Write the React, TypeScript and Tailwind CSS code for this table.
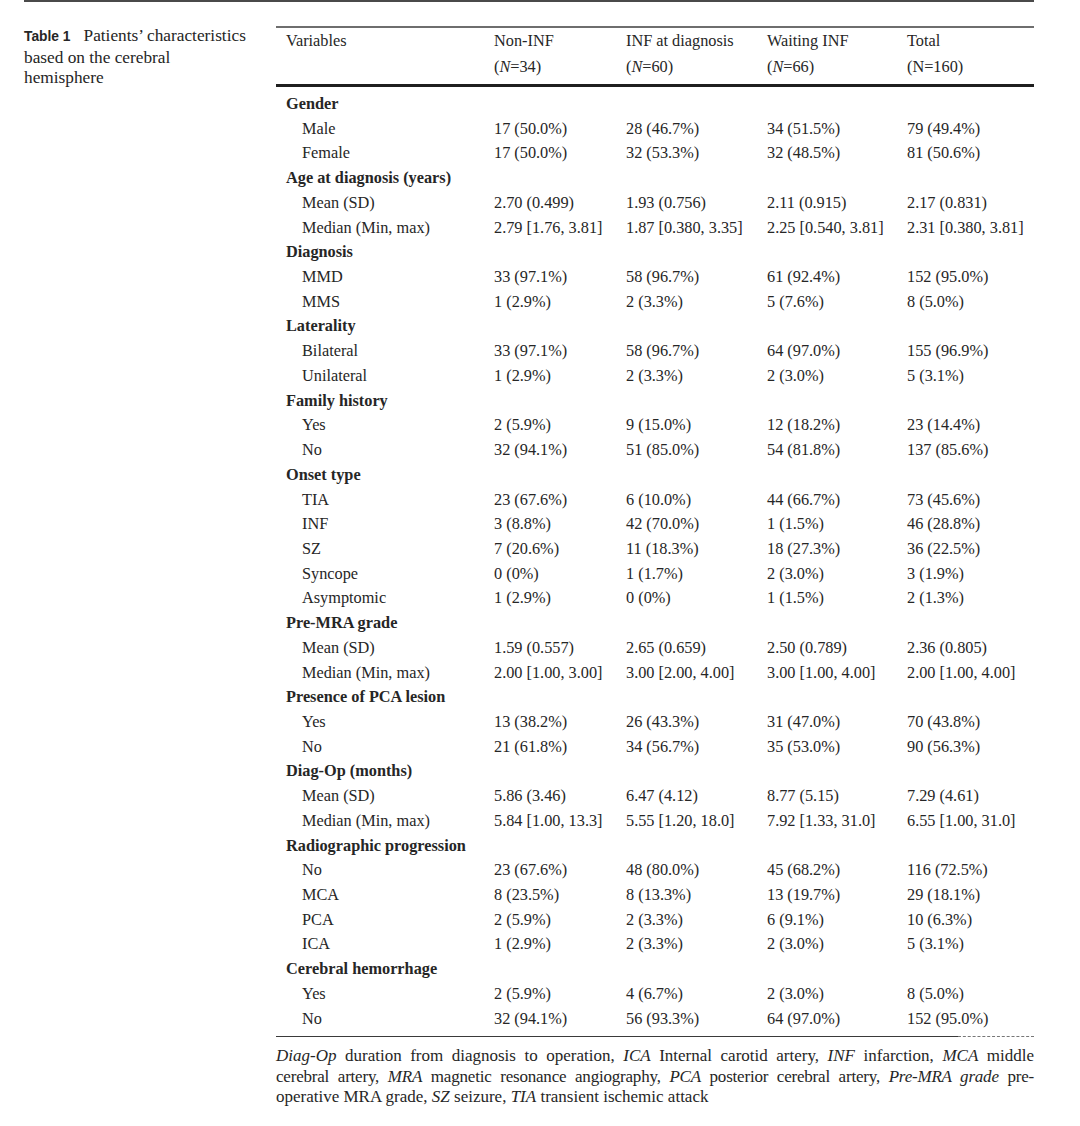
import React from "react";

type Row = { label: string; group?: boolean; values?: string[] };

const rows: Row[] = [
  { label: "Gender", group: true },
  { label: "Male", values: ["17 (50.0%)", "28 (46.7%)", "34 (51.5%)", "79 (49.4%)"] },
  { label: "Female", values: ["17 (50.0%)", "32 (53.3%)", "32 (48.5%)", "81 (50.6%)"] },
  { label: "Age at diagnosis (years)", group: true },
  { label: "Mean (SD)", values: ["2.70 (0.499)", "1.93 (0.756)", "2.11 (0.915)", "2.17 (0.831)"] },
  { label: "Median (Min, max)", values: ["2.79 [1.76, 3.81]", "1.87 [0.380, 3.35]", "2.25 [0.540, 3.81]", "2.31 [0.380, 3.81]"] },
  { label: "Diagnosis", group: true },
  { label: "MMD", values: ["33 (97.1%)", "58 (96.7%)", "61 (92.4%)", "152 (95.0%)"] },
  { label: "MMS", values: ["1 (2.9%)", "2 (3.3%)", "5 (7.6%)", "8 (5.0%)"] },
  { label: "Laterality", group: true },
  { label: "Bilateral", values: ["33 (97.1%)", "58 (96.7%)", "64 (97.0%)", "155 (96.9%)"] },
  { label: "Unilateral", values: ["1 (2.9%)", "2 (3.3%)", "2 (3.0%)", "5 (3.1%)"] },
  { label: "Family history", group: true },
  { label: "Yes", values: ["2 (5.9%)", "9 (15.0%)", "12 (18.2%)", "23 (14.4%)"] },
  { label: "No", values: ["32 (94.1%)", "51 (85.0%)", "54 (81.8%)", "137 (85.6%)"] },
  { label: "Onset type", group: true },
  { label: "TIA", values: ["23 (67.6%)", "6 (10.0%)", "44 (66.7%)", "73 (45.6%)"] },
  { label: "INF", values: ["3 (8.8%)", "42 (70.0%)", "1 (1.5%)", "46 (28.8%)"] },
  { label: "SZ", values: ["7 (20.6%)", "11 (18.3%)", "18 (27.3%)", "36 (22.5%)"] },
  { label: "Syncope", values: ["0 (0%)", "1 (1.7%)", "2 (3.0%)", "3 (1.9%)"] },
  { label: "Asymptomic", values: ["1 (2.9%)", "0 (0%)", "1 (1.5%)", "2 (1.3%)"] },
  { label: "Pre-MRA grade", group: true },
  { label: "Mean (SD)", values: ["1.59 (0.557)", "2.65 (0.659)", "2.50 (0.789)", "2.36 (0.805)"] },
  { label: "Median (Min, max)", values: ["2.00 [1.00, 3.00]", "3.00 [2.00, 4.00]", "3.00 [1.00, 4.00]", "2.00 [1.00, 4.00]"] },
  { label: "Presence of PCA lesion", group: true },
  { label: "Yes", values: ["13 (38.2%)", "26 (43.3%)", "31 (47.0%)", "70 (43.8%)"] },
  { label: "No", values: ["21 (61.8%)", "34 (56.7%)", "35 (53.0%)", "90 (56.3%)"] },
  { label: "Diag-Op (months)", group: true },
  { label: "Mean (SD)", values: ["5.86 (3.46)", "6.47 (4.12)", "8.77 (5.15)", "7.29 (4.61)"] },
  { label: "Median (Min, max)", values: ["5.84 [1.00, 13.3]", "5.55 [1.20, 18.0]", "7.92 [1.33, 31.0]", "6.55 [1.00, 31.0]"] },
  { label: "Radiographic progression", group: true },
  { label: "No", values: ["23 (67.6%)", "48 (80.0%)", "45 (68.2%)", "116 (72.5%)"] },
  { label: "MCA", values: ["8 (23.5%)", "8 (13.3%)", "13 (19.7%)", "29 (18.1%)"] },
  { label: "PCA", values: ["2 (5.9%)", "2 (3.3%)", "6 (9.1%)", "10 (6.3%)"] },
  { label: "ICA", values: ["1 (2.9%)", "2 (3.3%)", "2 (3.0%)", "5 (3.1%)"] },
  { label: "Cerebral hemorrhage", group: true },
  { label: "Yes", values: ["2 (5.9%)", "4 (6.7%)", "2 (3.0%)", "8 (5.0%)"] },
  { label: "No", values: ["32 (94.1%)", "56 (93.3%)", "64 (97.0%)", "152 (95.0%)"] },
];

const cols = "grid grid-cols-[208px_132px_141px_140px_1fr] px-[10px]";
const justified = "whitespace-nowrap text-justify [text-align-last:justify]";

export default function App() {
  return (
    <div className="min-h-[1126px] w-[1080px] bg-white text-[#262626] font-['Liberation_Serif','Times_New_Roman',serif] text-[16.3px]">
      <div className="ml-[24px] w-[1010px] border-t-2 border-[#4a4a4a]" />
      <div className="flex pl-[24px] pt-[24px]">
        <div className="w-[252px] pr-[4px] text-[17.3px] leading-[20.5px]">
          <span className="inline-block mr-[13px] font-['Liberation_Sans',Arial,sans-serif] font-bold text-[13.8px]">Table 1</span>
          Patients’ characteristics
          <br />
          based on the cerebral
          <br />
          hemisphere
        </div>
        <div className="w-[758px]">
          <div className="border-t-2 border-[#6e6e6e]" />
          <div className={`${cols} leading-[26px] pt-0 pb-[4px]`}>
            <div>Variables</div>
            <div>
              Non-INF
              <br />(<i>N</i>=34)
            </div>
            <div>
              INF at diagnosis
              <br />(<i>N</i>=60)
            </div>
            <div>
              Waiting INF
              <br />(<i>N</i>=66)
            </div>
            <div>
              Total
              <br />(N=160)
            </div>
          </div>
          <div className="border-t-[3px] border-[#1f1f1f]" />
          <div className="pt-[5px] pb-[5px]">
            {rows.map((r, i) =>
              r.group ? (
                <div key={i} className={`${cols} h-[24.73px] leading-[24.73px] font-bold`}>
                  <div className="col-span-5">{r.label}</div>
                </div>
              ) : (
                <div key={i} className={`${cols} h-[24.73px] leading-[24.73px]`}>
                  <div className="pl-[16px]">{r.label}</div>
                  {r.values!.map((v, j) => (
                    <div key={j} className="whitespace-nowrap">
                      {v}
                    </div>
                  ))}
                </div>
              )
            )}
          </div>
          <div className="flex">
            <div className="flex-1 border-t border-[#3a3a3a]" />
            <div className="w-[76px] border-t border-dashed border-[#777]" />
          </div>
          <div className="pt-[9px] text-[17px] leading-[20.5px]">
            <div className={justified}>
              <i>Diag-Op</i> duration from diagnosis to operation, <i>ICA</i> Internal carotid artery, <i>INF</i> infarction,{" "}
              <i>MCA</i> middle
            </div>
            <div className={`${justified} tracking-[-0.2px]`}>
              cerebral artery, <i>MRA</i> magnetic resonance angiography, <i>PCA</i> posterior cerebral artery,{" "}
              <i>Pre-MRA grade</i> pre-
            </div>
            <div>
              operative MRA grade, <i>SZ</i> seizure, <i>TIA</i> transient ischemic attack
            </div>
          </div>
        </div>
      </div>
    </div>
  );
}
